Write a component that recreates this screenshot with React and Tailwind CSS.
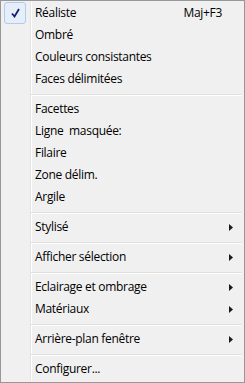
import React from "react";

const groups = [
  [
    { label: "Réaliste", shortcut: "Maj+F3", checked: true },
    { label: "Ombré" },
    { label: "Couleurs consistantes" },
    { label: "Faces délimitées" },
  ],
  [
    { label: "Facettes" },
    { label: "Ligne\u00a0 masquée:" },
    { label: "Filaire" },
    { label: "Zone délim." },
    { label: "Argile" },
  ],
  [{ label: "Stylisé", sub: true }],
  [{ label: "Afficher sélection", sub: true }],
  [
    { label: "Eclairage et ombrage", sub: true },
    { label: "Matériaux", sub: true },
  ],
  [{ label: "Arrière-plan fenêtre", sub: true }],
  [{ label: "Configurer..." }],
];

const Check = () => (
  <div className="absolute left-[3px] top-0 w-[22px] h-[22px] rounded-[3px] border border-[#aecbf0] bg-[#e6eefa] flex items-center justify-center">
    <svg width="9" height="10" viewBox="0 0 9 10">
      <path d="M1 5.5 L3.5 8.5 L8 1" fill="none" stroke="#14206e" strokeWidth="1.8" />
    </svg>
  </div>
);

const Item = ({ item }) => (
  <div className="relative h-[22px] flex items-center text-[12px] tracking-[-0.3px] text-black">
    {item.checked && <Check />}
    <span className="pl-[34px] flex-1 whitespace-pre">{item.label}</span>
    {item.shortcut && <span className="pr-[22px]">{item.shortcut}</span>}
    {item.sub && (
      <svg className="mr-[11px]" width="4" height="7" viewBox="0 0 4 7">
        <path d="M0 0 L4 3.5 L0 7 Z" fill="#1a1a1a" />
      </svg>
    )}
  </div>
);

const Separator = () => (
  <div className="h-[8px] pt-[4px] pl-[30px] pr-[2px]">
    <div className="h-[1px] bg-[#e0e0e0]" />
    <div className="h-[1px] bg-white" />
  </div>
);

export default function App() {
  return (
    <div
      className="w-[245px] h-[383px] border border-[#979797] bg-[#f0f0f0] pt-[1px] relative"
      style={{ fontFamily: '"Open Sans", "Noto Sans", sans-serif' }}
    >
      {/* gutter line */}
      <div className="absolute left-[29px] top-[1px] bottom-[1px] w-[2px] flex">
        <div className="w-[1px] bg-[#e2e3e3]" />
        <div className="w-[1px] bg-white" />
      </div>
      <div className="relative">
        {groups.map((g, i) => (
          <div key={i}>
            {i > 0 && <Separator />}
            {g.map((item) => (
              <Item key={item.label} item={item} />
            ))}
          </div>
        ))}
      </div>
    </div>
  );
}
